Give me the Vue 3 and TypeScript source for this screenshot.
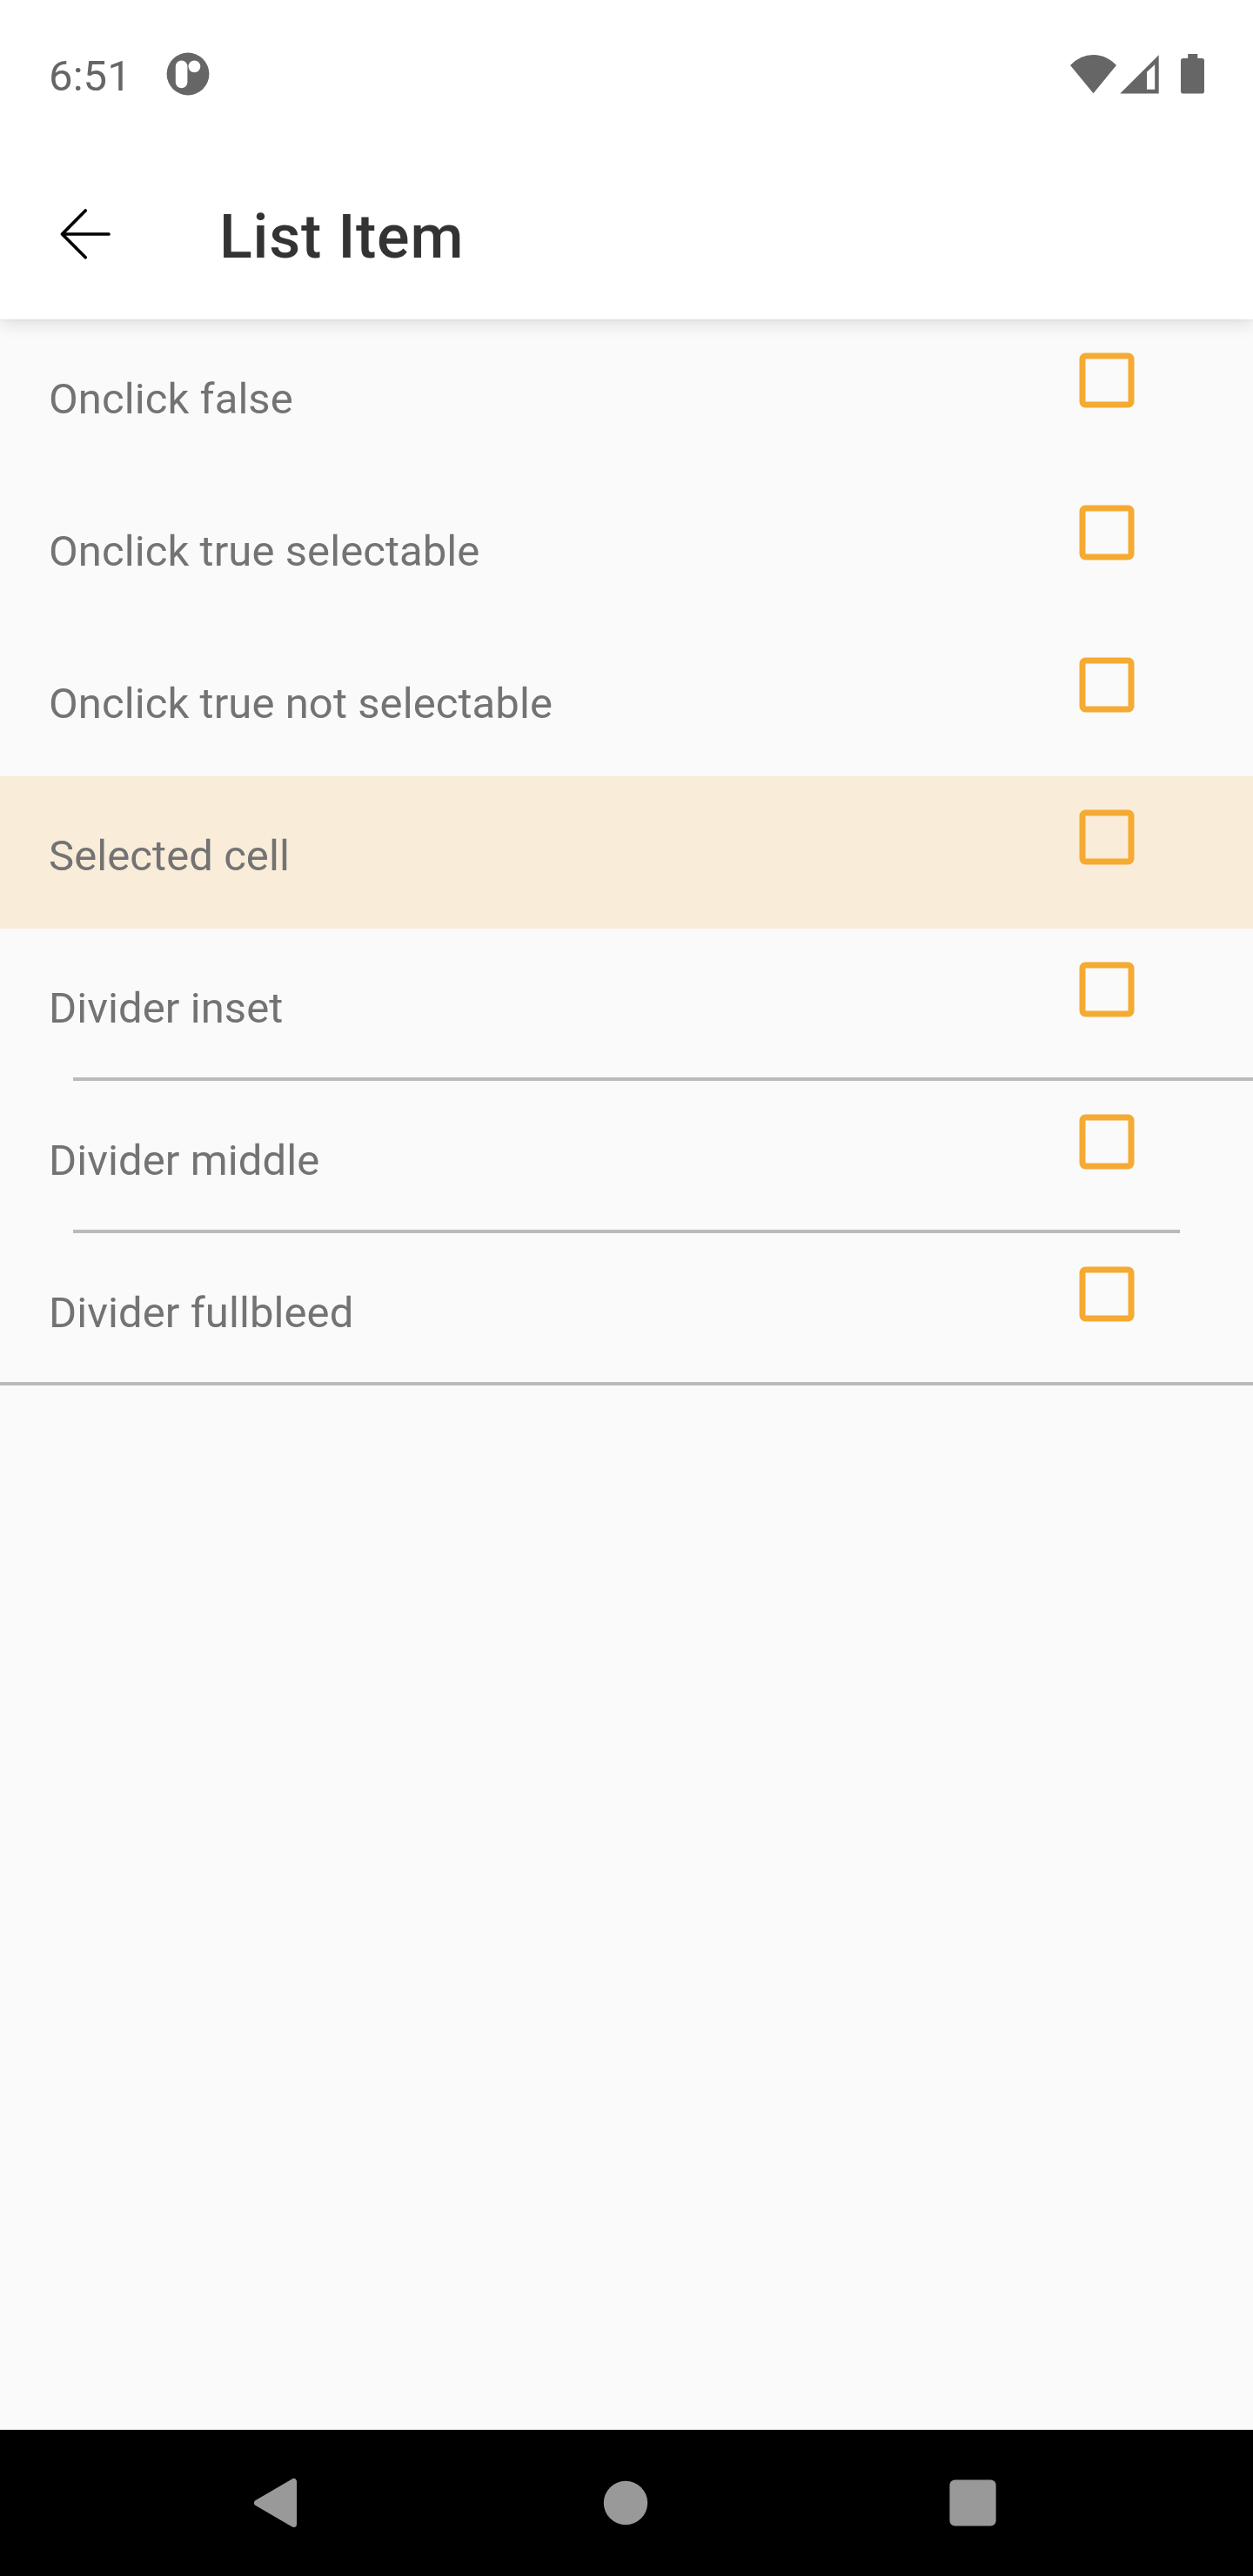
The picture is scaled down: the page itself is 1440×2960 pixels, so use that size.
<script setup lang="ts">
interface ListEntry {
  label: string
  selected?: boolean
  divider?: 'inset' | 'middle' | 'full'
}

const entries: ListEntry[] = [
  { label: 'Onclick false' },
  { label: 'Onclick true selectable' },
  { label: 'Onclick true not selectable' },
  { label: 'Selected cell', selected: true },
  { label: 'Divider inset', divider: 'inset' },
  { label: 'Divider middle', divider: 'middle' },
  { label: 'Divider fullbleed', divider: 'full' },
]
</script>

<template>
  <div class="screen">
    <header class="top">
      <div class="status">
        <span class="time">6:51</span>
        <svg class="notification" width="50" height="50" viewBox="0 0 50 50">
          <circle cx="25" cy="25" r="24.4" fill="#666" />
          <rect x="10.8" y="9.6" width="13.6" height="31.6" rx="6.8" fill="#fff" />
          <circle cx="32.4" cy="16.3" r="6.9" fill="#fff" />
        </svg>
        <svg class="indicators" width="160" height="50" viewBox="0 0 160 50" fill="#666">
          <path d="M0 15 Q11.5 3 26.5 3 Q41.5 3 53 15 L26.5 47.3Z" />
          <path fill-rule="evenodd" d="M57.3 47.6 L101.7 3.3 V47.6Z M88 22.8 V42.8 H97.2 V14.2Z" />
          <path d="M135.2 2 H146.3 V7 H151.2 Q154 7 154 9.8 V44.8 Q154 47.6 151.2 47.6 H129.8 Q127 47.6 127 44.8 V9.8 Q127 7 129.8 7 H135.2Z" />
        </svg>
      </div>
      <div class="toolbar">
        <svg class="back" width="84" height="84" viewBox="0 0 84 84" fill="none" stroke="#000" stroke-width="3.7" stroke-linecap="round" stroke-linejoin="round">
          <path d="M69 42 H15.5 M42.2 15 L15.5 42 L42.2 68.8" />
        </svg>
        <h1>List Item</h1>
      </div>
    </header>

    <main class="list">
      <div
        v-for="entry in entries"
        :key="entry.label"
        class="row"
        :class="{ selected: entry.selected }"
      >
        <div class="content">
          <span class="label">{{ entry.label }}</span>
          <svg class="checkbox" width="64" height="64" viewBox="0 0 64 64">
            <path
              fill="#f5aa32"
              fill-rule="evenodd"
              d="M7.5 .5 H56.5 A7 7 0 0 1 63.5 7.5 V56.5 A7 7 0 0 1 56.5 63.5 H7.5 A7 7 0 0 1 .5 56.5 V7.5 A7 7 0 0 1 7.5 .5Z M7.5 7.5 V56.5 H56.5 V7.5Z"
            />
          </svg>
        </div>
        <div v-if="entry.divider" class="divider" :class="entry.divider"></div>
      </div>
    </main>

    <nav class="navigation">
      <svg width="56" height="60" viewBox="0 0 56 60">
        <path d="M47.5 5.5 V54.5 L5.5 30Z" fill="#999" stroke="#999" stroke-width="7" stroke-linejoin="round" />
      </svg>
      <svg width="52" height="52" viewBox="0 0 52 52">
        <circle cx="26" cy="26" r="25.2" fill="#999" />
      </svg>
      <svg width="54" height="54" viewBox="0 0 54 54">
        <rect x=".4" y=".4" width="53.2" height="53.2" rx="6" fill="#999" />
      </svg>
    </nav>
  </div>
</template>

<style>
body {
  margin: 0;
}
</style>

<style scoped>
.screen {
  display: flex;
  flex-direction: column;
  width: 1440px;
  height: 2960px;
  overflow: hidden;
  background: #fafafa;
  font-family: Roboto, sans-serif;
}

.top {
  position: relative;
  flex: none;
  height: 367px;
  background: #fff;
  box-shadow: 0 5px 18px rgba(0, 0, 0, 0.12), 0 0 4px rgba(0, 0, 0, 0.06);
}

.status {
  display: flex;
  align-items: flex-start;
  height: 171px;
  padding: 0 56px;
  box-sizing: border-box;
}

.time {
  width: 134.5px;
  padding-top: 59px;
  font-size: 49px;
  line-height: 57px;
  letter-spacing: 0.1px;
  color: #666;
}

.notification {
  margin-top: 60px;
}

.indicators {
  margin: 60px -6px 0 auto;
}

.toolbar {
  display: flex;
  align-items: center;
  height: 196px;
  padding-left: 56px;
}

.back {
  flex: none;
}

h1 {
  margin: 6px 0 0 112px;
  font-size: 70px;
  line-height: 82px;
  font-weight: 500;
  letter-spacing: 0.8px;
  color: #333;
}

.row {
  display: flex;
  flex-direction: column;
  height: 175px;
}

.row.selected {
  background: #f9ecd9;
}

.content {
  display: flex;
  flex: 1;
  align-items: flex-start;
  justify-content: space-between;
  padding: 0 136px 0 56px;
}

.label {
  padding-top: 63px;
  font-size: 49px;
  line-height: 57px;
  letter-spacing: 0.08px;
  color: #737373;
}

.checkbox {
  margin-top: 38px;
}

.divider {
  flex: none;
  height: 4px;
  background: #bababa;
}

.divider.inset {
  margin-left: 84px;
}

.divider.middle {
  margin: 0 84px;
}

.navigation {
  display: flex;
  align-items: center;
  justify-content: space-between;
  box-sizing: border-box;
  height: 168px;
  margin-top: auto;
  padding: 0 295px 0 290px;
  background: #000;
}
</style>
